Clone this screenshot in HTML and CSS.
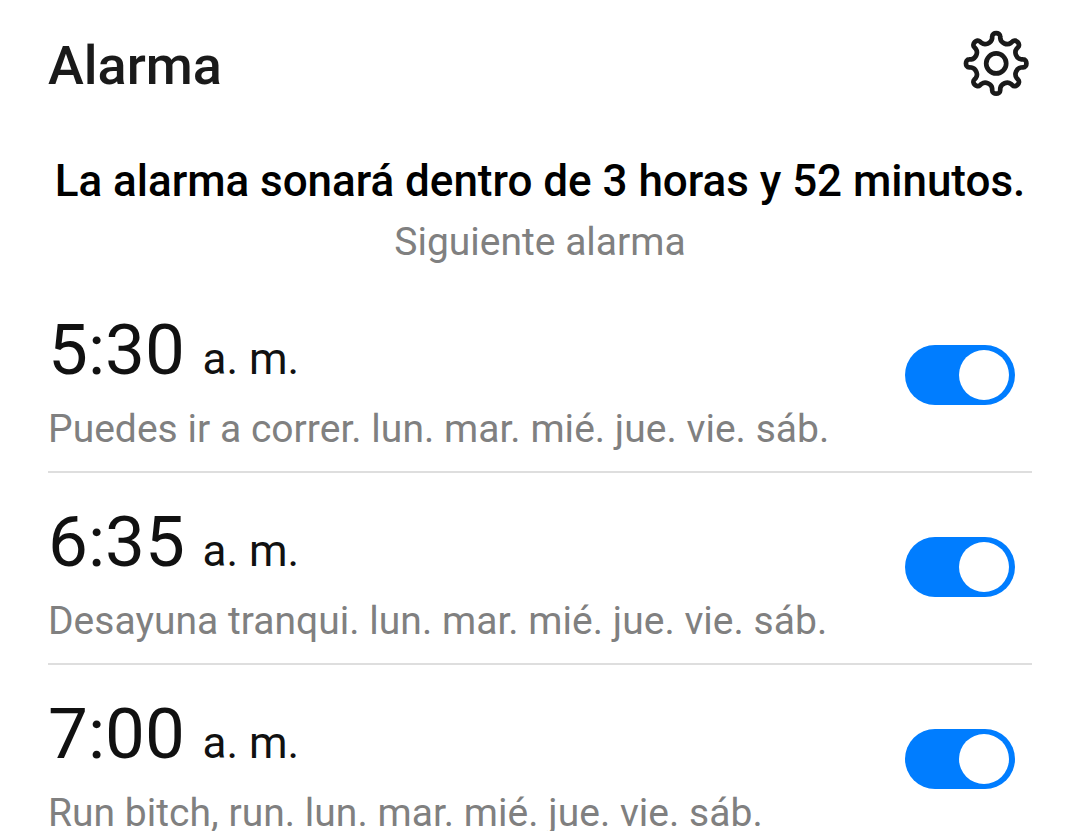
FILE: index.html
```html
<!DOCTYPE html>
<html lang="es">
<head>
  <meta charset="UTF-8" />
  <meta name="viewport" content="width=device-width, initial-scale=1.0" />
  <title>Alarma</title>
  <link rel="stylesheet" href="styles.css">
</head>
<body>

  <!-- Header -->
  <header class="header">
    <h1>Alarma</h1>
    <button class="settings" aria-label="Ajustes">
      <svg width="66" height="66" viewBox="-33.2 -33.4 66 66" fill="none" stroke="#1a1a1a" stroke-width="4.7" stroke-linejoin="round">
        <circle r="10" />
        <path id="gear" d="" />
      </svg>
    </button>
  </header>

  <!-- Next alarm -->
  <section class="next">
    <h2>La alarma sonará dentro de 3 horas y 52 minutos.</h2>
    <p>Siguiente alarma</p>
  </section>

  <!-- Alarm list -->
  <main class="alarms">
    <div class="alarm">
      <div class="info">
        <div class="time">5:30 <span class="period">a. m.</span></div>
        <p class="days">Puedes ir a correr. lun. mar. mié. jue. vie. sáb.</p>
      </div>
      <button class="switch" role="switch" aria-checked="true"></button>
    </div>
    <div class="alarm">
      <div class="info">
        <div class="time">6:35 <span class="period">a. m.</span></div>
        <p class="days">Desayuna tranqui. lun. mar. mié. jue. vie. sáb.</p>
      </div>
      <button class="switch" role="switch" aria-checked="true"></button>
    </div>
    <div class="alarm">
      <div class="info">
        <div class="time">7:00 <span class="period">a. m.</span></div>
        <p class="days">Run bitch, run. lun. mar. mié. jue. vie. sáb.</p>
      </div>
      <button class="switch" role="switch" aria-checked="true"></button>
    </div>
  </main>

  <script>
    // Gear outline with eight rounded teeth
    let d = '';
    for (let i = 0; i < 8; i++) {
      const a = i * Math.PI / 4;
      const p = (x, y) => {
        return (x * Math.cos(a) - y * Math.sin(a)).toFixed(2) + ' ' + (x * Math.sin(a) + y * Math.cos(a)).toFixed(2) + ' ';
      };
      d += (i ? 'L' : 'M') + p(-4, -27);
      d += 'C' + p(-4, -31.3) + p(4, -31.3) + p(4, -27);
      d += 'L' + p(4.1, -24.8) + 'C' + p(4.6, -20.4) + p(10.8, -17.7) + p(14.6, -20.4);
    }
    document.getElementById('gear').setAttribute('d', d + 'Z');
  </script>

</body>
</html>
```

FILE: styles.css
```css
* {
  box-sizing: border-box;
}
body {
  margin: 0;
  height: 831px;
  overflow: hidden;
  padding: 0 48px;
  background-color: #fff;
  color: #111;
  font-family: Roboto, "Noto Sans", sans-serif;
}
h1, h2, p {
  margin: 0;
}
button {
  border: 0;
  padding: 0;
  background: none;
}
.header {
  display: flex;
  justify-content: space-between;
  height: 132px;
}
.header h1 {
  padding-top: 33px;
  font-size: 54px;
  line-height: 66px;
  font-weight: 500;
  color: #1a1a1a;
}
.settings {
  width: 66px;
  height: 66px;
  margin: 30px 3px 0 0;
}
.settings svg {
  display: block;
}
.next {
  height: 149px;
  padding-top: 20px;
  text-align: center;
  white-space: nowrap;
}
.next h2 {
  font-size: 44px;
  line-height: 58px;
  font-weight: 500;
  letter-spacing: -0.03px;
  color: #000;
}
.next p {
  padding-top: 8px;
  font-size: 39px;
  line-height: 48px;
  color: #808080;
}
.alarm {
  display: flex;
  justify-content: space-between;
  height: 192px;
  border-bottom: 2px solid #dedede;
}
.info {
  padding-top: 25px;
  white-space: nowrap;
}
.time {
  height: 88px;
  font-size: 71px;
  line-height: 88px;
}
.period {
  font-size: 44px;
}
.days {
  padding-top: 11px;
  font-size: 39px;
  line-height: 48px;
  letter-spacing: 0.03px;
  color: #808080;
}
.switch {
  width: 110px;
  height: 60px;
  margin: 64px 17px 0 0;
  padding: 5px 6px;
  border-radius: 30px;
  background-color: #007dff;
}
.switch::before {
  content: "";
  display: block;
  width: 50px;
  height: 50px;
  margin-left: auto;
  border-radius: 50%;
  background-color: #fff;
}
```
